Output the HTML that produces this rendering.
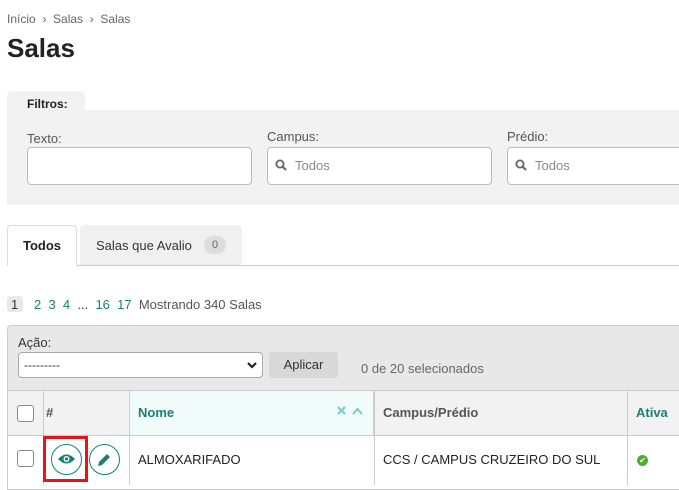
<!DOCTYPE html>
<html><head><meta charset="utf-8"><style>
*{box-sizing:border-box;margin:0;padding:0}
body{width:679px;height:485px;overflow:hidden;background:#fff;font-family:"Liberation Sans",sans-serif;font-size:13px;color:#333;position:relative}
.a{position:absolute;white-space:nowrap}
.inp{position:absolute;background:#fff;border:1px solid #bbb;border-radius:4px;height:38px}
.teal{color:#1a8074}
</style></head><body>
<div class="a" style="left:7px;top:12px;font-size:12px;color:#666">Início &nbsp;›&nbsp; Salas &nbsp;›&nbsp; Salas</div>
<div class="a" style="left:7px;top:33px;font-size:26px;font-weight:bold;color:#222">Salas</div>

<div class="a" style="left:7px;top:91px;width:78px;height:20px;background:#f2f2f2;border-radius:5px 5px 0 0"></div>
<div class="a" style="left:27px;top:97px;font-size:12px;font-weight:bold;color:#222">Filtros:</div>
<div class="a" style="left:7px;top:110px;width:672px;height:95px;background:#f2f2f2"></div>
<div class="a" style="left:27px;top:131px;color:#555">Texto:</div>
<div class="a" style="left:267px;top:129px;color:#555">Campus:</div>
<div class="a" style="left:507px;top:129px;color:#555">Prédio:</div>
<div class="inp" style="left:27px;top:147px;width:225px"></div>
<div class="inp" style="left:267px;top:147px;width:225px"></div>
<div class="inp" style="left:507px;top:147px;width:190px"></div>
<svg class="a" style="left:275px;top:159px" width="12" height="12" viewBox="0 0 12 12"><circle cx="5" cy="5" r="3.6" fill="none" stroke="#666" stroke-width="1.8"/><path d="M7.5 7.5L11 11" stroke="#666" stroke-width="2.2"/></svg>
<div class="a" style="left:295px;top:158px;color:#888">Todos</div>
<svg class="a" style="left:515px;top:159px" width="12" height="12" viewBox="0 0 12 12"><circle cx="5" cy="5" r="3.6" fill="none" stroke="#666" stroke-width="1.8"/><path d="M7.5 7.5L11 11" stroke="#666" stroke-width="2.2"/></svg>
<div class="a" style="left:535px;top:158px;color:#888">Todos</div>

<div class="a" style="left:7px;top:265px;width:672px;height:1px;background:#ccc"></div>
<div class="a" style="left:7px;top:225px;width:70px;height:41px;background:#fff;border:1px solid #ddd;border-bottom:none;border-radius:4px 4px 0 0"></div>
<div class="a" style="left:23px;top:238px;font-weight:bold;color:#222">Todos</div>
<div class="a" style="left:80px;top:225px;width:162px;height:40px;background:#f0f0f0;border-radius:4px 4px 0 0"></div>
<div class="a" style="left:96px;top:238px;color:#333">Salas que Avalio</div>
<div class="a" style="left:204px;top:236px;width:22px;height:18px;background:#ddd;border-radius:9px;font-size:11px;color:#666;text-align:center;line-height:18px">0</div>

<div class="a" style="left:7px;top:296px;width:16px;height:16px;background:#e8e8e8;border-radius:3px"></div>
<div class="a" style="left:11px;top:297px;color:#333">1</div>
<div class="a teal" style="left:34px;top:297px">2 &nbsp;3 &nbsp;4 &nbsp;<span style="color:#333">...</span> &nbsp;16 &nbsp;17 <span style="color:#555">&nbsp;Mostrando 340 Salas</span></div>

<div class="a" style="left:7px;top:325px;width:680px;height:65px;background:#e8e8e8;border:1px solid #ccc;border-bottom:none;border-radius:4px 0 0 0"></div>
<div class="a" style="left:18px;top:335px;color:#333">Ação:</div>
<div class="a" style="left:18px;top:352px;width:245px;height:26px;background:#fff;border:1px solid #aaa;border-radius:4px;padding:5px 5px;font-size:12px">---------</div>
<svg class="a" style="left:247px;top:362px" width="10" height="7" viewBox="0 0 10 7"><path d="M1 1L5 5L9 1" fill="none" stroke="#222" stroke-width="2.2"/></svg>
<div class="a" style="left:269px;top:352px;width:69px;height:26px;background:#d8d8d8;border-radius:3px;text-align:center;line-height:26px">Aplicar</div>
<div class="a" style="left:361px;top:361px;color:#666">0 de 20 selecionados</div>

<div class="a" style="left:7px;top:390px;width:680px;height:100px;border:1px solid #ccc;background:#fff"></div>
<div class="a" style="left:7px;top:390px;width:680px;height:46px;background:#f2f2f2;border:1px solid #ccc"></div>
<div class="a" style="left:129px;top:390px;width:245px;height:46px;background:#f0fbfa;border:1px solid #ccc"></div>
<div class="a" style="left:43px;top:390px;width:1px;height:95px;background:#ccc"></div>
<div class="a" style="left:129px;top:390px;width:1px;height:95px;background:#ccc"></div>
<div class="a" style="left:374px;top:390px;width:1px;height:95px;background:#ccc"></div>
<div class="a" style="left:627px;top:390px;width:1px;height:95px;background:#ccc"></div>
<div class="a" style="left:17px;top:405px;width:17px;height:17px;border:1px solid #888;border-radius:3px;background:#fff"></div>
<div class="a" style="left:17px;top:450px;width:17px;height:17px;border:1px solid #888;border-radius:3px;background:#fff"></div>
<div class="a" style="left:46px;top:405px;font-weight:bold;color:#555">#</div>
<div class="a teal" style="left:138px;top:405px;font-weight:bold">Nome</div>
<svg class="a" style="left:337px;top:406px" width="28" height="10" viewBox="0 0 28 10"><path d="M1 1L8 8M8 1L1 8" stroke="#7cc" stroke-width="2"/><path d="M16 8L20.5 3L25 8" fill="none" stroke="#7cc" stroke-width="2"/></svg>
<div class="a" style="left:383px;top:405px;font-weight:bold;color:#555">Campus/Prédio</div>
<div class="a teal" style="left:636px;top:405px;font-weight:bold">Ativa</div>

<div class="a" style="left:43px;top:436px;width:45px;height:46px;border:3px solid #e8141c"></div>
<div class="a" style="left:51px;top:444px;width:31px;height:31px;border:1px solid #1a8074;border-radius:50%"></div>
<svg class="a" style="left:57px;top:453px" width="19" height="12" viewBox="0 0 19 12"><path d="M1 6Q9.5-3 18 6Q9.5 15 1 6Z" fill="#1a8074"/><circle cx="9.5" cy="6" r="3" fill="#fff"/><circle cx="9.5" cy="6" r="1.6" fill="#1a8074"/></svg>
<div class="a" style="left:89px;top:444px;width:31px;height:31px;border:1px solid #1a8074;border-radius:50%"></div>
<svg class="a" style="left:97px;top:452px" width="15" height="15" viewBox="0 0 15 15"><path d="M2 10L10 2L13 5L5 13L1 14Z" fill="#1a8074"/></svg>
<div class="a" style="left:138px;top:452px;color:#222">ALMOXARIFADO</div>
<div class="a" style="left:383px;top:452px;color:#222">CCS / CAMPUS CRUZEIRO DO SUL</div>
<div class="a" style="left:637px;top:455px;width:11px;height:11px;border-radius:50%;background:#4caf2a;color:#fff;font-size:8px;line-height:11px;text-align:center">✔</div>
</body></html>
